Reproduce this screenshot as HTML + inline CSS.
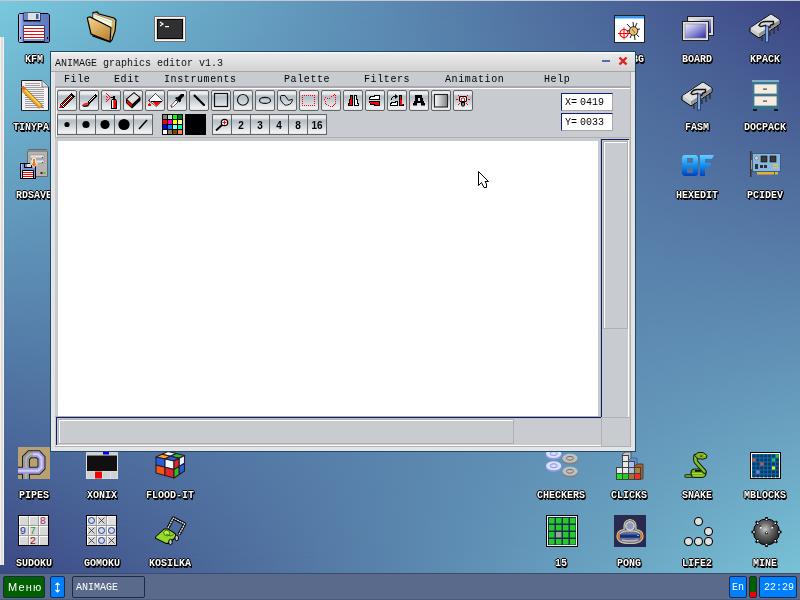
<!DOCTYPE html>
<html><head><meta charset="utf-8">
<style>
*{margin:0;padding:0;box-sizing:border-box}
html,body{width:800px;height:600px;overflow:hidden}
body{position:relative;font-family:"Liberation Mono",monospace;font-size:10px;background:#5a86af}
.a{position:absolute}
svg{position:absolute;overflow:visible}
.btn svg,.sb svg{shape-rendering:geometricPrecision}
#title span,.mi,.coord span,.tb span{will-change:transform}
#bgb{left:0;top:0;width:800px;height:573px;background:linear-gradient(to right,#3c4985,#79c2d6)}
#bgt{left:0;top:0;width:800px;height:573px;background:linear-gradient(to right,#79cade,#3c4583);-webkit-mask-image:linear-gradient(to bottom,#000,rgba(0,0,0,0));mask-image:linear-gradient(to bottom,#000,rgba(0,0,0,0))}
#topline{left:0;top:0;width:800px;height:1px;background:#c4c8d4}
#lstrip{left:0;top:37px;width:4px;height:528px;background:linear-gradient(to right,#f0f0f0 0,#f0f0f0 1px,#e0dcdc 1px,#e0dcdc 3px,#f8f4f4 3px)}
#task{left:0;top:573px;width:800px;height:27px;background:#5a6a8a;border-top:1px solid #3c4a6c;border-bottom:1px solid #4c5a7c}
.tb{position:absolute;border:1px solid #1a2a4a;border-radius:2px;color:#fff;font-size:10px;line-height:10px}
.tb span{position:absolute;top:6px}
.lbl{position:absolute;color:#fff;font-family:"Liberation Mono",monospace;font-size:10px;font-weight:bold;will-change:transform;text-align:center;width:80px;line-height:10px;text-shadow:1px 0 #000,-1px 0 #000,0 1px #000,0 -1px #000,1px 1px #000,1px 2px #000}
.ico{position:absolute;width:32px;height:32px}
#title span{position:absolute;left:4px;top:7px;color:#222;line-height:10px}
.mi{position:absolute;line-height:10px;color:#000;letter-spacing:0.6px}
.btn{position:absolute;width:20px;height:21px;border:1px solid #646464;border-radius:2px;
background:linear-gradient(#dce0e4 0px,#eaecee 1px,#eaecee 3px,#b8c0c8 5px,#b8c0c8 7px,#f0f2f4 17px,#e0e2e4 19px)}
.sb{position:absolute;top:114px;width:20px;height:21px;border:1px solid #646464;
background:linear-gradient(#dce0e4 0px,#eaecee 1px,#eaecee 3px,#b8c0c8 5px,#b8c0c8 7px,#f0f2f4 17px,#e0e2e4 19px)}
.btn svg,.sb svg{left:-1px;top:-1px}
.num{position:absolute;top:6px;left:0;width:18px;text-align:center;font-family:"Liberation Sans",sans-serif;font-weight:bold;font-size:10px;line-height:10px;color:#000;will-change:transform}
.coord{position:absolute;left:561px;width:52px;height:18px;background:#fff;border-top:1px solid #102070;border-left:1px solid #102070;border-right:1px solid #a8a8a8;border-bottom:1px solid #a8a8a8}
.coord span{position:absolute;left:3px;top:4px;line-height:10px;color:#000}
</style></head><body>
<div id="bgb" class="a"></div>
<div id="bgt" class="a"></div>
<div id="topline" class="a"></div>
<div id="lstrip" class="a"></div>
<svg style="left:0;top:0" width="800" height="573" viewBox="0 0 800 573"><g transform="translate(18,11)"><defs><linearGradient id="fb" x1="0" x2="1"><stop offset="0" stop-color="#b8c8f0"/><stop offset="0.15" stop-color="#7890d8"/><stop offset="1" stop-color="#6078c0"/></linearGradient></defs><path d="M1.5 2.5 L30 2.5 L31.5 4 L31.5 30.5 L30.5 31.5 L1.5 31.5 L0.5 30.5 L0.5 3.5 Z" fill="url(#fb)" stroke="#000" stroke-width="1"/><rect x="5.5" y="1.5" width="17" height="9" fill="#000"/><rect x="6" y="2" width="4" height="7" fill="#6a88c8"/><rect x="10" y="2" width="12" height="7" fill="#e0e0e0"/><rect x="18" y="3" width="2.5" height="5" fill="#3060b0"/><rect x="5.5" y="14.5" width="21" height="17" fill="#000"/><rect x="6" y="15" width="20" height="15" fill="#f0ffff"/><rect x="6" y="17" width="20" height="1" fill="#ff0000"/><rect x="6" y="20" width="20" height="1" fill="#ff0000"/><rect x="6" y="23" width="20" height="1" fill="#ff0000"/><rect x="6" y="26" width="20" height="1" fill="#ff0000"/><rect x="6" y="28" width="20" height="2" fill="#8098d0"/><rect x="2" y="26" width="1" height="2" fill="#000"/><rect x="29" y="26" width="1" height="2" fill="#000"/></g><g transform="translate(86,11)"><defs><linearGradient id="fo" x1="0" y1="0" x2="0.6" y2="1"><stop offset="0" stop-color="#f8d890"/><stop offset="1" stop-color="#c08838"/></linearGradient></defs><path d="M7 1.5 L11 1 L13 3 L28 7 L30 9 L29 20 L26 29 L24 31 L7 25 Z" fill="#e8b860" stroke="#000" stroke-width="1.2"/><path d="M7 2.5 L27 9.5 L25 27 L7 20 Z" fill="#f8f8f0" stroke="#606080" stroke-width="0.6"/><path d="M8 5 L26 12 L25 24" fill="none" stroke="#d0f080" stroke-width="1"/><path d="M1.5 6.5 L4 6 L24 16 L25 16.5 L24 30.5 L5 23 L1.5 8 Z" fill="url(#fo)" stroke="#000" stroke-width="1.2"/></g><g transform="translate(154,11)"><rect x="0.5" y="5.5" width="31" height="25" fill="#d8d8d8" stroke="#707070" stroke-width="1"/><rect x="1.5" y="6.5" width="29" height="23" fill="none" stroke="#f8f8f8" stroke-width="1"/><rect x="3" y="8" width="26" height="20" fill="#000"/><rect x="4" y="9" width="24" height="18" fill="#303030"/><path d="M6 11 L9 13 L6 15" fill="none" stroke="#fff" stroke-width="1.2"/><rect x="11" y="15" width="4" height="1.2" fill="#fff"/></g><g transform="translate(613,11)"><rect x="1.5" y="4.5" width="30" height="27" fill="#fff" stroke="#202020" stroke-width="1"/><rect x="2" y="5" width="29" height="2.5" fill="#3898f0"/><circle cx="11" cy="22.5" r="4" fill="none" stroke="#f00" stroke-width="1.2"/><path d="M11 16.5 V28.5 M5 22.5 H17" stroke="#f00" stroke-width="1"/><path d="M14 13 L26 26 M20 11 L22 29 M14 20 L27 18 M24 12 L17 27" stroke="#000" stroke-width="0.9"/><circle cx="20.5" cy="20" r="4.3" fill="#e8c070" stroke="#000" stroke-width="0.8"/><path d="M19 18 L22 22" stroke="#806030" stroke-width="1"/></g><g transform="translate(681,11)"><defs><linearGradient id="bd" x1="0" y1="0" x2="1" y2="1"><stop offset="0" stop-color="#f0f0ff"/><stop offset="0.6" stop-color="#8080d0"/><stop offset="1" stop-color="#2828a0"/></linearGradient></defs><rect x="6.5" y="5.5" width="26" height="19" fill="#d8d8d8" stroke="#202020" stroke-width="1"/><rect x="9" y="8" width="21" height="14" fill="url(#bd)"/><rect x="1.5" y="10.5" width="26" height="19" fill="#e0e0e0" stroke="#202020" stroke-width="1"/><rect x="4" y="13" width="21" height="14" fill="url(#bd)" stroke="#808080" stroke-width="0.6"/></g><g transform="translate(749,11)"><path d="M1 17 L22 3 L31 9 L31 13 L10 27 L1 21 Z" fill="#c8c8c8" stroke="#000" stroke-width="1"/><path d="M1.5 17 L22 3.5 L30.5 9 L10 22.5 Z" fill="#e0e0e0"/><path d="M10 22.5 L30.5 9 L30.5 12.5 L10 26 Z" fill="#909090"/><path d="M13 26 V30 M17 23 V28 M21 21 V25 M25 18 V23 M29 15 V20" stroke="#303030" stroke-width="1.5"/><path d="M10 14.5 Q11.5 10.5 16.5 10.5 L24.5 10.5 L24.5 13 L21.5 14.3 L20.8 16.3 L17.3 16.3 L16.6 14.3 L11.7 15.6 Z" fill="#d8d8d8" stroke="#101010" stroke-width="1.4"/><rect x="16.5" y="15" width="3" height="16" fill="#80a8e0" stroke="#203060" stroke-width="0.8"/></g><g transform="translate(18,79)"><path d="M3.5 1.5 L24 1.5 L30.5 8 L30.5 31.5 L3.5 31.5 Z" fill="#f4f0f4" stroke="#202020" stroke-width="1"/><path d="M24 1.5 L24 8 L30.5 8" fill="#e0e0e0" stroke="#606060" stroke-width="0.8"/><rect x="7" y="4" width="15" height="1" fill="#a0a0a0"/><rect x="7" y="6" width="15" height="1" fill="#a0a0a0"/><rect x="7" y="8" width="19" height="1" fill="#a0a0a0"/><rect x="7" y="10" width="19" height="1" fill="#a0a0a0"/><rect x="7" y="12" width="19" height="1" fill="#a0a0a0"/><rect x="7" y="14" width="19" height="1" fill="#a0a0a0"/><rect x="7" y="16" width="19" height="1" fill="#a0a0a0"/><rect x="7" y="18" width="19" height="1" fill="#a0a0a0"/><rect x="7" y="20" width="19" height="1" fill="#a0a0a0"/><rect x="7" y="22" width="19" height="1" fill="#a0a0a0"/><rect x="7" y="24" width="19" height="1" fill="#a0a0a0"/><rect x="7" y="26" width="19" height="1" fill="#a0a0a0"/><rect x="7" y="28" width="19" height="1" fill="#a0a0a0"/><line x1="5" y1="10" x2="23" y2="28" stroke="#000" stroke-width="5" stroke-opacity="0.5"/><line x1="5" y1="10" x2="23" y2="28" stroke="#f0a020" stroke-width="4"/><line x1="6" y1="10" x2="23" y2="27" stroke="#f8e040" stroke-width="1.2"/><path d="M3 8.5 L5 6.5 L8 9.5 L6 11.5 Z" fill="#e06030"/><path d="M22 26 L26 30 L24 27 Z" fill="#404040"/></g><g transform="translate(681,79)"><path d="M1 17 L22 3 L31 9 L31 13 L10 27 L1 21 Z" fill="#c8c8c8" stroke="#000" stroke-width="1"/><path d="M1.5 17 L22 3.5 L30.5 9 L10 22.5 Z" fill="#e0e0e0"/><path d="M10 22.5 L30.5 9 L30.5 12.5 L10 26 Z" fill="#909090"/><path d="M13 26 V30 M17 23 V28 M21 21 V25 M25 18 V23 M29 15 V20" stroke="#303030" stroke-width="1.5"/><path d="M10 14.5 Q11.5 10.5 16.5 10.5 L24.5 10.5 L24.5 13 L21.5 14.3 L20.8 16.3 L17.3 16.3 L16.6 14.3 L11.7 15.6 Z" fill="#d8d8d8" stroke="#101010" stroke-width="1.4"/><rect x="16.5" y="15" width="3" height="16" fill="#80a8e0" stroke="#203060" stroke-width="0.8"/></g><g transform="translate(749,79)"><rect x="3" y="1" width="27" height="30" fill="#3a7090"/><rect x="3" y="1" width="27" height="2" fill="#80b0c8"/><rect x="5" y="5" width="23" height="10" fill="#f4ece0" stroke="#507890" stroke-width="0.8"/><rect x="5" y="17" width="23" height="10" fill="#f4ece0" stroke="#507890" stroke-width="0.8"/><rect x="14" y="9.5" width="4" height="1.2" fill="#404850"/><rect x="14" y="21.5" width="4" height="1.2" fill="#404850"/><rect x="4" y="30" width="4" height="2" fill="#101820"/><rect x="25" y="30" width="4" height="2" fill="#101820"/></g><g transform="translate(18,147)"><path d="M9.5 5 L10.5 2.5 L28.5 2.5 L29.5 5 L29.5 29.5 L9.5 29.5 Z" fill="#b4b4b4" stroke="#686868" stroke-width="1"/><rect x="10" y="3" width="19" height="2" fill="#8c8c8c"/><rect x="12" y="8" width="14" height="3" fill="#e4e4e4" stroke="#8a8a8a" stroke-width="0.6"/><rect x="12" y="13" width="14" height="3" fill="#e4e4e4" stroke="#8a8a8a" stroke-width="0.6"/><rect x="24" y="10" width="1" height="1" fill="#a02020"/><rect x="24" y="15" width="1" height="1" fill="#a02020"/><rect x="22.5" y="25" width="2" height="2" fill="#800000"/><rect x="25.5" y="25" width="2" height="2" fill="#30d030"/><rect x="2" y="16" width="16" height="16" fill="#000"/><rect x="3" y="17" width="14" height="14" fill="#7890d8"/><rect x="3" y="17" width="1" height="14" fill="#b8c8f0"/><rect x="6" y="16" width="8" height="5" fill="#000"/><rect x="7" y="17" width="2" height="3" fill="#6a88c8"/><rect x="9" y="17" width="4" height="3" fill="#e0e0e0"/><rect x="4" y="23" width="12" height="9" fill="#000"/><rect x="5" y="24" width="10" height="7" fill="#f4ffff"/><rect x="5" y="25" width="10" height="1" fill="#f00"/><rect x="5" y="27" width="10" height="1" fill="#f00"/><rect x="5" y="29" width="10" height="1" fill="#f00"/><path d="M14.5 11.5 L17.5 11.5 L17.5 16.5 L19.5 16.5 L16 20.5 L12.5 16.5 L14.5 16.5 Z" fill="#f07818" stroke="#fff" stroke-width="0.8"/></g><g transform="translate(681,147)"><defs><linearGradient id="hx" x1="0" y1="0" x2="0" y2="1"><stop offset="0" stop-color="#60d0ff"/><stop offset="0.5" stop-color="#1090f0"/><stop offset="1" stop-color="#0040c0"/></linearGradient></defs><path d="M3 8 L15 8 L17 10 L17 16 L16 17.5 L17 19 L17 27 L15 29 L3 29 L1 27 L1 19 L2 17.5 L1 16 L1 10 Z M6 11 L6 16 L12 16 L12 11 Z M6 20 L6 26 L12 26 L12 20 Z" fill="url(#hx)" fill-rule="evenodd"/><path d="M19 8 L33 8 L31 12 L24 12 L24 16 L30 16 L29 20 L24 20 L24 29 L19 29 Z" fill="url(#hx)"/></g><g transform="translate(749,147)"><rect x="1" y="4" width="1.5" height="26" fill="#303030"/><rect x="2" y="13" width="2" height="9" fill="#a0a0a0"/><rect x="3.5" y="6.5" width="28" height="18" fill="#88b8e0" stroke="#305070" stroke-width="0.8"/><circle cx="7.5" cy="11" r="2" fill="#d0d0d0" stroke="#606060" stroke-width="0.5"/><rect x="12" y="9" width="6" height="6" fill="#383838" stroke="#101010" stroke-width="0.6"/><rect x="21" y="9" width="6" height="6" fill="#383838" stroke="#101010" stroke-width="0.6"/><rect x="6" y="17" width="3" height="5" fill="#303030"/><rect x="11" y="18" width="3" height="3" fill="#303030"/><rect x="15" y="18" width="3" height="3" fill="#303030"/><rect x="24" y="17" width="5" height="1.5" fill="#e8c050"/><rect x="24" y="20" width="5" height="1.5" fill="#e8c050"/><rect x="8" y="25" width="17" height="2.5" fill="#e8b030"/><rect x="26" y="25" width="3" height="2.5" fill="#e8b030"/></g><g transform="translate(18,447)"><rect x="0" y="0" width="32" height="32" fill="#b8a070"/><path d="M8 32 V11 L11.7 7.3 H20 L23.5 11 V20.5 L20.2 23.8 H0" fill="none" stroke="#202020" stroke-width="8" stroke-linejoin="miter"/><path d="M8 32 V11 L11.7 7.3 H16" fill="none" stroke="#989898" stroke-width="6"/><path d="M8 32 V11 L11.7 7.3 H16" fill="none" stroke="#b8b8b8" stroke-width="1.5"/><path d="M15 7.3 H20 L23.5 11 V20.5 L20.2 23.8 H0" fill="none" stroke="#a098e0" stroke-width="6"/><path d="M15 7.3 H20 L23.5 11 V20.5 L20.2 23.8 H0" fill="none" stroke="#d0d0f4" stroke-width="2"/></g><g transform="translate(86,447)"><rect x="0" y="5" width="32" height="27" fill="#e0e0e0"/><rect x="0" y="5" width="32" height="3" fill="#d0d0d0"/><rect x="17" y="5" width="6" height="2.5" fill="#0000f0"/><rect x="1" y="8.5" width="30" height="15.5" fill="#101010"/><rect x="1" y="24.5" width="7" height="7" fill="#d0d0d0"/><rect x="9" y="24.5" width="7" height="7" fill="#f00000"/><rect x="17" y="24.5" width="7" height="7" fill="#d0d0d0"/><rect x="25" y="24.5" width="6" height="7" fill="#d0d0d0"/></g><g transform="translate(154,447)"><polygon points="14,4.5 22.25,6.5 16.25,9.25 8,7.25" fill="#e8f8ff" stroke="#301828" stroke-width="1.1" stroke-linejoin="round"/><polygon points="8,7.25 16.25,9.25 11,12 2,10" fill="#f8a818" stroke="#301828" stroke-width="1.1" stroke-linejoin="round"/><polygon points="22.25,6.5 30.5,8.5 25.25,11.25 16.25,9.25" fill="#28c028" stroke="#301828" stroke-width="1.1" stroke-linejoin="round"/><polygon points="16.25,9.25 25.25,11.25 20,14 11,12" fill="#2060e0" stroke="#301828" stroke-width="1.1" stroke-linejoin="round"/><polygon points="2,10 11,12 11,20.25 2,18" fill="#2060e0" stroke="#301828" stroke-width="1.1" stroke-linejoin="round"/><polygon points="11,12 20,14 20,22.5 11,20.25" fill="#e8f8ff" stroke="#301828" stroke-width="1.1" stroke-linejoin="round"/><polygon points="2,18 11,20.25 11,28.5 2,26" fill="#f05818" stroke="#301828" stroke-width="1.1" stroke-linejoin="round"/><polygon points="11,20.25 20,22.5 20,31 11,28.5" fill="#e02828" stroke="#301828" stroke-width="1.1" stroke-linejoin="round"/><polygon points="20,14 25.25,11.25 25.25,19.4 20,22.5" fill="#e02828" stroke="#301828" stroke-width="1.1" stroke-linejoin="round"/><polygon points="25.25,11.25 30.5,8.5 30.5,16.25 25.25,19.4" fill="#e8f8ff" stroke="#301828" stroke-width="1.1" stroke-linejoin="round"/><polygon points="20,22.5 25.25,19.4 25.25,27.5 20,31" fill="#28c028" stroke="#301828" stroke-width="1.1" stroke-linejoin="round"/><polygon points="25.25,19.4 30.5,16.25 30.5,24 25.25,27.5" fill="#2060e0" stroke="#301828" stroke-width="1.1" stroke-linejoin="round"/></g><g transform="translate(545,447)"><ellipse cx="8.7" cy="8.0" rx="8" ry="4.8" fill="#9098e8"/><ellipse cx="8.7" cy="6.5" rx="7.6" ry="4.5" fill="#d8e0ff"/><ellipse cx="8.7" cy="6.5" rx="3.6" ry="1.9" fill="none" stroke="#8890e0" stroke-width="1"/><ellipse cx="8.7" cy="20.2" rx="8" ry="4.8" fill="#9098e8"/><ellipse cx="8.7" cy="18.7" rx="7.6" ry="4.5" fill="#d8e0ff"/><ellipse cx="8.7" cy="18.7" rx="3.6" ry="1.9" fill="none" stroke="#8890e0" stroke-width="1"/><ellipse cx="25" cy="12.8" rx="8" ry="4.8" fill="#808080"/><ellipse cx="25" cy="11.3" rx="7.6" ry="4.5" fill="#c0c0c0"/><ellipse cx="25" cy="11.3" rx="3.6" ry="1.9" fill="none" stroke="#707070" stroke-width="1"/><ellipse cx="25" cy="25.8" rx="8" ry="4.8" fill="#808080"/><ellipse cx="25" cy="24.3" rx="7.6" ry="4.5" fill="#c0c0c0"/><ellipse cx="25" cy="24.3" rx="3.6" ry="1.9" fill="none" stroke="#707070" stroke-width="1"/></g><g transform="translate(613,447)"><path d="M9 8 L12 5 L18 5 L18 14 L15 17 Z" fill="#c0c0c0" stroke="#404040" stroke-width="0.8"/><rect x="9.5" y="8.5" width="6" height="6" fill="#e8e8e8" stroke="#404040" stroke-width="1"/><rect x="9.5" y="14.5" width="6" height="6" fill="#e8e8e8" stroke="#404040" stroke-width="1"/><rect x="3.5" y="20.5" width="6" height="6" fill="#e8e8e8" stroke="#404040" stroke-width="1"/><rect x="9.5" y="20.5" width="6" height="6" fill="#e8e8e8" stroke="#404040" stroke-width="1"/><path d="M15 14 L18 11 L24 11 L24 20 L21 23 Z" fill="#6090d0" stroke="#3060a0" stroke-width="0.8"/><rect x="15.5" y="14.5" width="6" height="6" fill="#a8c0e8" stroke="#404040" stroke-width="1"/><rect x="15.5" y="20.5" width="6" height="6" fill="#a8c0e8" stroke="#404040" stroke-width="1"/><path d="M21 20 L24 17 L30 17 L30 32 L27 32 Z" fill="#a06030" stroke="#503010" stroke-width="0.8"/><rect x="21.5" y="20.5" width="6" height="6" fill="#b08040" stroke="#404040" stroke-width="1"/><rect x="3.5" y="26.5" width="6" height="6" fill="#20e020" stroke="#404040" stroke-width="1"/><rect x="9.5" y="26.5" width="6" height="6" fill="#20d020" stroke="#404040" stroke-width="1"/><rect x="15.5" y="26.5" width="6" height="6" fill="#a07040" stroke="#404040" stroke-width="1"/><rect x="21.5" y="26.5" width="6" height="6" fill="#f03020" stroke="#404040" stroke-width="1"/></g><g transform="translate(681,447)"><path d="M5 29 H11" stroke="#102008" stroke-width="3.4" stroke-linecap="round"/><path d="M5 29 H11" stroke="#88c020" stroke-width="1.6" stroke-linecap="round"/><path d="M10 26 Q10 22 14 22 L21 22 Q25 22 25 26 Q25 30.5 20 30.5 L14 30.5 Q10 30.5 10 26 Z" fill="#70b018" stroke="#102008" stroke-width="1.2"/><path d="M11 26.5 H24 M11.5 28.8 H23.5" stroke="#b0e040" stroke-width="0.9"/><rect x="14" y="23" width="6" height="1.8" fill="#101008"/><path d="M23.5 24.5 L15 15 Q14 13 14.5 9" fill="none" stroke="#102008" stroke-width="4.6" stroke-linecap="round"/><path d="M23.5 24.5 L15 15 Q14 13 14.5 9" fill="none" stroke="#80c020" stroke-width="2.6" stroke-linecap="round"/><path d="M13.5 8.5 L17 5.5 L22 5.5 L26 8.5 L25.5 11 L22 12.2 L17 11.8 Z" fill="#78b820" stroke="#102008" stroke-width="1"/><rect x="19.3" y="8.3" width="1.8" height="1.6" fill="#e00000"/><rect x="23" y="8" width="1" height="1" fill="#e0e000"/></g><g transform="translate(749,447)"><rect x="1" y="5" width="31" height="27" fill="#000"/><rect x="2" y="6" width="29" height="25" fill="#fff"/><rect x="3" y="7" width="27" height="23" fill="#0070d8"/><rect x="3.5" y="7.5" width="3" height="3" fill="#183848"/><rect x="7.4" y="7.5" width="3" height="3" fill="#183848"/><rect x="11.3" y="7.5" width="3" height="3" fill="#183848"/><rect x="15.2" y="7.5" width="3" height="3" fill="#183848"/><rect x="19.1" y="7.5" width="3" height="3" fill="#183848"/><rect x="23.0" y="7.5" width="3" height="3" fill="#183848"/><rect x="26.9" y="7.5" width="3" height="3" fill="#30c020"/><rect x="3.5" y="11.5" width="3" height="3" fill="#f05010"/><rect x="7.4" y="11.5" width="3" height="3" fill="#183848"/><rect x="11.3" y="11.5" width="3" height="3" fill="#183848"/><rect x="15.2" y="11.5" width="3" height="3" fill="#183848"/><rect x="19.1" y="11.5" width="3" height="3" fill="#183848"/><rect x="23.0" y="11.5" width="3" height="3" fill="#30c020"/><rect x="26.9" y="11.5" width="3" height="3" fill="#183848"/><rect x="3.5" y="15.5" width="3" height="3" fill="#183848"/><rect x="7.4" y="15.5" width="3" height="3" fill="#183848"/><rect x="11.3" y="15.5" width="3" height="3" fill="#f05010"/><rect x="15.2" y="15.5" width="3" height="3" fill="#183848"/><rect x="19.1" y="15.5" width="3" height="3" fill="#183848"/><rect x="23.0" y="15.5" width="3" height="3" fill="#183848"/><rect x="26.9" y="15.5" width="3" height="3" fill="#183848"/><rect x="3.5" y="19.5" width="3" height="3" fill="#183848"/><rect x="7.4" y="19.5" width="3" height="3" fill="#183848"/><rect x="11.3" y="19.5" width="3" height="3" fill="#183848"/><rect x="15.2" y="19.5" width="3" height="3" fill="#183848"/><rect x="19.1" y="19.5" width="3" height="3" fill="#183848"/><rect x="23.0" y="19.5" width="3" height="3" fill="#f0f000"/><rect x="26.9" y="19.5" width="3" height="3" fill="#183848"/><rect x="3.5" y="23.5" width="3" height="3" fill="#183848"/><rect x="7.4" y="23.5" width="3" height="3" fill="#a080a0"/><rect x="11.3" y="23.5" width="3" height="3" fill="#183848"/><rect x="15.2" y="23.5" width="3" height="3" fill="#183848"/><rect x="19.1" y="23.5" width="3" height="3" fill="#183848"/><rect x="23.0" y="23.5" width="3" height="3" fill="#183848"/><rect x="26.9" y="23.5" width="3" height="3" fill="#183848"/><rect x="3.5" y="27.5" width="3" height="3" fill="#183848"/><rect x="7.4" y="27.5" width="3" height="3" fill="#183848"/><rect x="11.3" y="27.5" width="3" height="3" fill="#183848"/><rect x="15.2" y="27.5" width="3" height="3" fill="#183848"/><rect x="19.1" y="27.5" width="3" height="3" fill="#183848"/><rect x="23.0" y="27.5" width="3" height="3" fill="#183848"/><rect x="26.9" y="27.5" width="3" height="3" fill="#183848"/></g><g transform="translate(18,515)"><rect x="0" y="0" width="31" height="31" fill="#000"/><rect x="1" y="1" width="29" height="29" fill="#a0a0a0"/><rect x="1" y="1" width="9" height="9" fill="#fff"/><rect x="2" y="2" width="8" height="8" fill="#d8d8d8"/><rect x="11" y="1" width="9" height="9" fill="#fff"/><rect x="12" y="2" width="8" height="8" fill="#d8d8d8"/><rect x="21" y="1" width="9" height="9" fill="#fff"/><rect x="22" y="2" width="8" height="8" fill="#d8d8d8"/><rect x="1" y="11" width="9" height="9" fill="#fff"/><rect x="2" y="12" width="8" height="8" fill="#d8d8d8"/><rect x="11" y="11" width="9" height="9" fill="#fff"/><rect x="12" y="12" width="8" height="8" fill="#d8d8d8"/><rect x="21" y="11" width="9" height="9" fill="#fff"/><rect x="22" y="12" width="8" height="8" fill="#d8d8d8"/><rect x="1" y="21" width="9" height="9" fill="#fff"/><rect x="2" y="22" width="8" height="8" fill="#d8d8d8"/><rect x="11" y="21" width="9" height="9" fill="#fff"/><rect x="12" y="22" width="8" height="8" fill="#d8d8d8"/><rect x="21" y="21" width="9" height="9" fill="#fff"/><rect x="22" y="22" width="8" height="8" fill="#d8d8d8"/><text x="25" y="8.5" font-family="Liberation Mono" font-size="10.5" fill="#b03070" text-anchor="middle">8</text><text x="5" y="18.5" font-family="Liberation Mono" font-size="10.5" fill="#2040a0" text-anchor="middle">9</text><text x="15" y="18.5" font-family="Liberation Mono" font-size="10.5" fill="#20a020" text-anchor="middle">7</text><text x="15" y="28.5" font-family="Liberation Mono" font-size="10.5" fill="#a01010" text-anchor="middle">2</text></g><g transform="translate(86,515)"><rect x="0" y="0" width="31" height="31" fill="#000"/><rect x="1" y="1" width="29" height="29" fill="#a0a0a0"/><rect x="1" y="1" width="9" height="9" fill="#fff"/><rect x="2" y="2" width="8" height="8" fill="#d8d8d8"/><rect x="11" y="1" width="9" height="9" fill="#fff"/><rect x="12" y="2" width="8" height="8" fill="#d8d8d8"/><rect x="21" y="1" width="9" height="9" fill="#fff"/><rect x="22" y="2" width="8" height="8" fill="#e0e0e0"/><rect x="1" y="11" width="9" height="9" fill="#fff"/><rect x="2" y="12" width="8" height="8" fill="#d8d8d8"/><rect x="11" y="11" width="9" height="9" fill="#fff"/><rect x="12" y="12" width="8" height="8" fill="#d8d8d8"/><rect x="21" y="11" width="9" height="9" fill="#fff"/><rect x="22" y="12" width="8" height="8" fill="#d8d8d8"/><rect x="1" y="21" width="9" height="9" fill="#fff"/><rect x="2" y="22" width="8" height="8" fill="#d8d8d8"/><rect x="11" y="21" width="9" height="9" fill="#fff"/><rect x="12" y="22" width="8" height="8" fill="#d8d8d8"/><rect x="21" y="21" width="9" height="9" fill="#fff"/><rect x="22" y="22" width="8" height="8" fill="#d8d8d8"/><circle cx="5.5" cy="5.5" r="3" fill="none" stroke="#2040b0" stroke-width="1"/><path d="M12.5 2.5 L18.5 8.5 M18.5 2.5 L12.5 8.5" stroke="#303030" stroke-width="0.8"/><path d="M2.5 12.5 L8.5 18.5 M8.5 12.5 L2.5 18.5" stroke="#303030" stroke-width="0.8"/><circle cx="15.5" cy="15.5" r="3" fill="none" stroke="#2040b0" stroke-width="1"/><circle cx="25.5" cy="15.5" r="3" fill="none" stroke="#2040b0" stroke-width="1"/><path d="M2.5 22.5 L8.5 28.5 M8.5 22.5 L2.5 28.5" stroke="#303030" stroke-width="0.8"/><circle cx="15.5" cy="25.5" r="3" fill="none" stroke="#2040b0" stroke-width="1"/><path d="M22.5 22.5 L28.5 28.5 M28.5 22.5 L22.5 28.5" stroke="#303030" stroke-width="0.8"/></g><g transform="translate(154,515)"><path d="M14 13 L19.3 3 L30.7 9 L25 19.5" fill="none" stroke="#000" stroke-width="3.2" stroke-linejoin="round"/><path d="M14 13 L19.3 3 L30.7 9 L25 19.5" fill="none" stroke="#f0f0f0" stroke-width="1.3" stroke-dasharray="2 0.6" stroke-linejoin="round"/><path d="M1 22 L10 13.5 L14 13.5 L22 18.5 L22 22.5 L14.5 29 L12 29 L1 23.5 Z" fill="#000"/><path d="M2 22 L10.3 14.5 L13.8 14.5 L21 19 L21 22 L14 27.8 L12 27.8 L2 22.8 Z" fill="#98d828"/><path d="M2 22.5 L12 27.5 L14 27.5 L21 21.5 L21 22 L14 28 L12 28 L2 23 Z" fill="#60a818"/><path d="M9.5 17 L12 15 L15 16 L16 19 L14 21 L10.5 20 Z" fill="#b8f040" stroke="#2a6010" stroke-width="0.8"/><path d="M12 19 L17 21 L20 19" fill="none" stroke="#2a6010" stroke-width="0.8"/><ellipse cx="16.5" cy="27" rx="1.8" ry="2.8" fill="#c8c8c8" stroke="#000" stroke-width="1"/><ellipse cx="22.7" cy="23" rx="1.8" ry="2.8" fill="#c8c8c8" stroke="#000" stroke-width="1"/></g><g transform="translate(545,515)"><rect x="1" y="0" width="32" height="32" fill="#000"/><rect x="2" y="1" width="30" height="30" fill="#f0f0f0"/><rect x="3" y="2" width="28" height="28" fill="#103050"/><rect x="4" y="3" width="5.5" height="5.5" fill="#28c828"/><rect x="11" y="3" width="5.5" height="5.5" fill="#28c828"/><rect x="18" y="3" width="5.5" height="5.5" fill="#28c828"/><rect x="25" y="3" width="5.5" height="5.5" fill="#28c828"/><rect x="4" y="10" width="5.5" height="5.5" fill="#28c828"/><rect x="11" y="10" width="5.5" height="5.5" fill="#28c828"/><rect x="18" y="10" width="5.5" height="5.5" fill="#28c828"/><rect x="25" y="10" width="5.5" height="5.5" fill="#28c828"/><rect x="4" y="17" width="5.5" height="5.5" fill="#28c828"/><rect x="11" y="17" width="5.5" height="5.5" fill="#a0a0a0"/><rect x="18" y="17" width="5.5" height="5.5" fill="#28c828"/><rect x="25" y="17" width="5.5" height="5.5" fill="#28c828"/><rect x="4" y="24" width="5.5" height="5.5" fill="#28c828"/><rect x="11" y="24" width="5.5" height="5.5" fill="#28c828"/><rect x="18" y="24" width="5.5" height="5.5" fill="#28c828"/><rect x="25" y="24" width="5.5" height="5.5" fill="#28c828"/></g><g transform="translate(613,515)"><rect x="1" y="0" width="32" height="32" fill="#2a2a50"/><path d="M4 21 Q4 15.5 11 14.5 Q10 5 17 4.5 Q24 5 23 14.5 Q30 15.5 30 21 Q30 28.5 17 28.5 Q4 28.5 4 21 Z" fill="#6a7090" stroke="#d8c890" stroke-width="1.2"/><path d="M6 21 Q6 17 13 16 L21 16 Q28 17 28 21" fill="none" stroke="#e8e0c0" stroke-width="1"/><circle cx="17" cy="11" r="4.2" fill="#9098b8" stroke="#f0f0f0" stroke-width="1"/><path d="M9 25 Q17 27 25 25" fill="none" stroke="#b8b8d0" stroke-width="1.5"/><rect x="6" y="19.5" width="22" height="3" fill="#1030a0"/><rect x="7" y="21.5" width="20" height="1" fill="#103048"/><rect x="24" y="20" width="2" height="1" fill="#40d0c0"/><rect x="4.5" y="19" width="2.5" height="4.5" rx="1" fill="#e07818"/><rect x="27" y="19" width="2.5" height="4.5" rx="1" fill="#e07818"/></g><g transform="translate(681,515)"><circle cx="17.5" cy="6.5" r="4" fill="#e0e0e0" stroke="#000" stroke-width="1.1"/><circle cx="27.5" cy="16.5" r="4" fill="#e0e0e0" stroke="#000" stroke-width="1.1"/><circle cx="7.5" cy="26.5" r="4" fill="#e0e0e0" stroke="#000" stroke-width="1.1"/><circle cx="17.5" cy="26.5" r="4" fill="#e0e0e0" stroke="#000" stroke-width="1.1"/><circle cx="27.5" cy="26.5" r="4" fill="#e0e0e0" stroke="#000" stroke-width="1.1"/></g><g transform="translate(749,515)"><defs><radialGradient id="mn" cx="0.45" cy="0.4" r="0.65"><stop offset="0" stop-color="#c8c8c8"/><stop offset="0.4" stop-color="#686868"/><stop offset="1" stop-color="#181818"/></radialGradient></defs><circle cx="17.5" cy="17" r="13" fill="url(#mn)" stroke="#000" stroke-width="1"/><line x1="17.5" y1="6.0" x2="17.5" y2="2.0" stroke="#000" stroke-width="2.6"/><rect x="16.7" y="3.7" width="1.6" height="1.6" fill="#fff"/><line x1="25.3" y1="9.2" x2="28.1" y2="6.4" stroke="#000" stroke-width="2.6"/><rect x="25.5" y="7.4" width="1.6" height="1.6" fill="#fff"/><line x1="28.5" y1="17.0" x2="32.5" y2="17.0" stroke="#000" stroke-width="2.6"/><rect x="29.2" y="16.2" width="1.6" height="1.6" fill="#fff"/><line x1="25.3" y1="24.8" x2="28.1" y2="27.6" stroke="#000" stroke-width="2.6"/><rect x="25.5" y="25.0" width="1.6" height="1.6" fill="#fff"/><line x1="17.5" y1="28.0" x2="17.5" y2="32.0" stroke="#000" stroke-width="2.6"/><rect x="16.7" y="28.7" width="1.6" height="1.6" fill="#fff"/><line x1="9.7" y1="24.8" x2="6.9" y2="27.6" stroke="#000" stroke-width="2.6"/><rect x="7.9" y="25.0" width="1.6" height="1.6" fill="#fff"/><line x1="6.5" y1="17.0" x2="2.5" y2="17.0" stroke="#000" stroke-width="2.6"/><rect x="4.2" y="16.2" width="1.6" height="1.6" fill="#fff"/><line x1="9.7" y1="9.2" x2="6.9" y2="6.4" stroke="#000" stroke-width="2.6"/><rect x="7.9" y="7.4" width="1.6" height="1.6" fill="#fff"/><circle cx="17.5" cy="18" r="1.6" fill="#303030"/><rect x="17" y="17" width="1.2" height="1.2" fill="#fff"/><rect x="11" y="12" width="1.5" height="1.5" fill="#fff"/><rect x="22.5" y="12" width="1.5" height="1.5" fill="#fff"/><rect x="10.5" y="10.5" width="1.2" height="1.2" fill="#000"/><rect x="23.5" y="10.5" width="1.2" height="1.2" fill="#000"/></g></svg><div class="lbl" style="left:-6px;top:55px">KFM</div><div class="lbl" style="left:589px;top:55px">MTDBG</div><div class="lbl" style="left:657px;top:55px">BOARD</div><div class="lbl" style="left:725px;top:55px">KPACK</div><div class="lbl" style="left:-6px;top:123px">TINYPAD</div><div class="lbl" style="left:657px;top:123px">FASM</div><div class="lbl" style="left:725px;top:123px">DOCPACK</div><div class="lbl" style="left:-6px;top:191px">RDSAVE</div><div class="lbl" style="left:657px;top:191px">HEXEDIT</div><div class="lbl" style="left:725px;top:191px">PCIDEV</div><div class="lbl" style="left:-6px;top:491px">PIPES</div><div class="lbl" style="left:62px;top:491px">XONIX</div><div class="lbl" style="left:130px;top:491px">FLOOD-IT</div><div class="lbl" style="left:521px;top:491px">CHECKERS</div><div class="lbl" style="left:589px;top:491px">CLICKS</div><div class="lbl" style="left:657px;top:491px">SNAKE</div><div class="lbl" style="left:725px;top:491px">MBLOCKS</div><div class="lbl" style="left:-6px;top:559px">SUDOKU</div><div class="lbl" style="left:62px;top:559px">GOMOKU</div><div class="lbl" style="left:130px;top:559px">KOSILKA</div><div class="lbl" style="left:521px;top:559px">15</div><div class="lbl" style="left:589px;top:559px">PONG</div><div class="lbl" style="left:657px;top:559px">LIFE2</div><div class="lbl" style="left:725px;top:559px">MINE</div>
<div class="a" style="left:50px;top:51px;width:586px;height:401px;background:#1c4a6a;"></div>
<div class="a" style="left:51px;top:52px;width:584px;height:399px;background:#e4e4e4;"></div>
<div class="a" style="left:51px;top:52px;width:1px;height:399px;background:#ece8e8;"></div>
<div class="a" style="left:51px;top:52px;width:584px;height:19px;background:linear-gradient(#f8f8f8 0,#f8f8f8 1px,#eaeaea 2px,#d2d2d2 19px);"></div>
<div class="a" style="left:55px;top:59px;line-height:10px;color:#111;will-change:transform">ANIMAGE graphics editor v1.3</div>
<svg style="left:0;top:0" width="800" height="100"><rect x="602" y="60" width="8" height="2" fill="#5a6ab0"/><path d="M619.5 57.5 L626.5 64.5 M626.5 57.5 L619.5 64.5" stroke="#e02020" stroke-width="2.4"/></svg>
<div class="a" style="left:51px;top:71px;width:584px;height:1px;background:#a8a6a8;"></div>
<div class="a" style="left:55px;top:72px;width:576px;height:375px;background:#c8ccd0;"></div>
<div class="a" style="left:630px;top:72px;width:1px;height:375px;background:#b0b0b0;"></div>
<div class="a mi" style="left:64px;top:75px">File</div>
<div class="a mi" style="left:114px;top:75px">Edit</div>
<div class="a mi" style="left:164px;top:75px">Instruments</div>
<div class="a mi" style="left:284px;top:75px">Palette</div>
<div class="a mi" style="left:364px;top:75px">Filters</div>
<div class="a mi" style="left:445px;top:75px">Animation</div>
<div class="a mi" style="left:544px;top:75px">Help</div>
<div class="a" style="left:55px;top:86px;width:575px;height:2px;background:#aaa6aa;"></div>
<div class="a" style="left:55px;top:88px;width:1px;height:50px;background:#b0b0b0;"></div>
<div class="a" style="left:56px;top:88px;width:574px;height:1px;background:#ffffff;"></div>
<div class="a" style="left:56px;top:88px;width:1px;height:49px;background:#ffffff;"></div>
<div class="a" style="left:55px;top:137px;width:576px;height:1px;background:#b0b0b0;"></div>
<div class="a" style="left:58px;top:141px;width:540px;height:275px;background:#ffffff;"></div>
<div class="a" style="left:600px;top:138px;width:1px;height:278px;background:#b8b8bc;"></div>
<div class="a" style="left:601px;top:139px;width:1px;height:278px;background:#0c1c6c;"></div>
<div class="a" style="left:601px;top:139px;width:28px;height:1px;background:#0c1c6c;"></div>
<div class="a" style="left:628px;top:140px;width:1px;height:277px;background:#ffffff;"></div>
<div class="a" style="left:603px;top:141px;width:25px;height:188px;background:#b0b0b0;"></div>
<div class="a" style="left:604px;top:142px;width:23px;height:186px;background:#ffffff;"></div>
<div class="a" style="left:605px;top:143px;width:22px;height:185px;background:#c8ccd0;"></div>
<div class="a" style="left:55px;top:416px;width:546px;height:1px;background:#b0b0b0;"></div>
<div class="a" style="left:56px;top:417px;width:545px;height:1px;background:#0c1c6c;"></div>
<div class="a" style="left:56px;top:417px;width:1px;height:28px;background:#0c1c6c;"></div>
<div class="a" style="left:57px;top:418px;width:544px;height:1px;background:#c0c4c8;"></div>
<div class="a" style="left:58px;top:419px;width:456px;height:25px;background:#b0b0b0;"></div>
<div class="a" style="left:59px;top:420px;width:454px;height:23px;background:#ffffff;"></div>
<div class="a" style="left:60px;top:421px;width:453px;height:22px;background:#c8ccd0;"></div>
<div class="a" style="left:56px;top:445px;width:545px;height:1px;background:#ffffff;"></div>
<div class="a" style="left:55px;top:446px;width:576px;height:1px;background:#b0b0b0;"></div>
<div class="a" style="left:601px;top:417px;width:30px;height:30px;background:#b0b0b0;"></div>
<div class="a" style="left:602px;top:418px;width:28px;height:28px;background:#c8ccd0;"></div>
<div class="coord" style="top:93px"><span>X=</span><span style="left:18px">0419</span></div>
<div class="coord" style="top:113px"><span>Y=</span><span style="left:18px">0033</span></div>
<div class="btn" style="left:57px;top:90px"><svg width="20" height="21" viewBox="0 0 20 21"><rect x="3" y="14" width="1" height="1" fill="#000"/><rect x="3" y="15" width="1" height="1" fill="#000"/><rect x="4" y="13" width="1" height="1" fill="#000"/><rect x="4" y="14" width="1" height="1" fill="#000"/><rect x="4" y="15" width="1" height="1" fill="#000"/><rect x="4" y="16" width="1" height="1" fill="#000"/><rect x="5" y="12" width="1" height="1" fill="#000"/><rect x="5" y="13" width="1" height="1" fill="#000"/><rect x="5" y="14" width="1" height="1" fill="#000"/><rect x="5" y="15" width="1" height="1" fill="#000"/><rect x="5" y="16" width="1" height="1" fill="#000"/><rect x="5" y="17" width="1" height="1" fill="#000"/><rect x="6" y="11" width="1" height="1" fill="#000"/><rect x="6" y="12" width="1" height="1" fill="#000"/><rect x="6" y="13" width="1" height="1" fill="#000"/><rect x="6" y="14" width="1" height="1" fill="#000"/><rect x="6" y="15" width="1" height="1" fill="#000"/><rect x="6" y="16" width="1" height="1" fill="#000"/><rect x="6" y="17" width="1" height="1" fill="#000"/><rect x="7" y="10" width="1" height="1" fill="#000"/><rect x="7" y="11" width="1" height="1" fill="#000"/><rect x="7" y="12" width="1" height="1" fill="#000"/><rect x="7" y="13" width="1" height="1" fill="#000"/><rect x="7" y="14" width="1" height="1" fill="#000"/><rect x="7" y="15" width="1" height="1" fill="#000"/><rect x="7" y="16" width="1" height="1" fill="#000"/><rect x="8" y="9" width="1" height="1" fill="#000"/><rect x="8" y="10" width="1" height="1" fill="#000"/><rect x="8" y="11" width="1" height="1" fill="#000"/><rect x="8" y="12" width="1" height="1" fill="#000"/><rect x="8" y="13" width="1" height="1" fill="#000"/><rect x="8" y="14" width="1" height="1" fill="#000"/><rect x="8" y="15" width="1" height="1" fill="#000"/><rect x="9" y="8" width="1" height="1" fill="#000"/><rect x="9" y="9" width="1" height="1" fill="#000"/><rect x="9" y="10" width="1" height="1" fill="#000"/><rect x="9" y="11" width="1" height="1" fill="#000"/><rect x="9" y="12" width="1" height="1" fill="#000"/><rect x="9" y="13" width="1" height="1" fill="#000"/><rect x="9" y="14" width="1" height="1" fill="#000"/><rect x="10" y="7" width="1" height="1" fill="#000"/><rect x="10" y="8" width="1" height="1" fill="#000"/><rect x="10" y="9" width="1" height="1" fill="#000"/><rect x="10" y="10" width="1" height="1" fill="#000"/><rect x="10" y="11" width="1" height="1" fill="#000"/><rect x="10" y="12" width="1" height="1" fill="#000"/><rect x="10" y="13" width="1" height="1" fill="#000"/><rect x="11" y="6" width="1" height="1" fill="#000"/><rect x="11" y="7" width="1" height="1" fill="#000"/><rect x="11" y="8" width="1" height="1" fill="#000"/><rect x="11" y="9" width="1" height="1" fill="#000"/><rect x="11" y="10" width="1" height="1" fill="#000"/><rect x="11" y="11" width="1" height="1" fill="#000"/><rect x="11" y="12" width="1" height="1" fill="#000"/><rect x="12" y="5" width="1" height="1" fill="#000"/><rect x="12" y="6" width="1" height="1" fill="#000"/><rect x="12" y="7" width="1" height="1" fill="#000"/><rect x="12" y="8" width="1" height="1" fill="#000"/><rect x="12" y="9" width="1" height="1" fill="#000"/><rect x="12" y="10" width="1" height="1" fill="#000"/><rect x="12" y="11" width="1" height="1" fill="#000"/><rect x="13" y="4" width="1" height="1" fill="#000"/><rect x="13" y="5" width="1" height="1" fill="#000"/><rect x="13" y="6" width="1" height="1" fill="#000"/><rect x="13" y="7" width="1" height="1" fill="#000"/><rect x="13" y="8" width="1" height="1" fill="#000"/><rect x="13" y="9" width="1" height="1" fill="#000"/><rect x="13" y="10" width="1" height="1" fill="#000"/><rect x="14" y="3" width="1" height="1" fill="#000"/><rect x="14" y="4" width="1" height="1" fill="#000"/><rect x="14" y="5" width="1" height="1" fill="#000"/><rect x="14" y="6" width="1" height="1" fill="#000"/><rect x="14" y="7" width="1" height="1" fill="#000"/><rect x="14" y="8" width="1" height="1" fill="#000"/><rect x="14" y="9" width="1" height="1" fill="#000"/><rect x="15" y="4" width="1" height="1" fill="#000"/><rect x="15" y="5" width="1" height="1" fill="#000"/><rect x="15" y="6" width="1" height="1" fill="#000"/><rect x="15" y="7" width="1" height="1" fill="#000"/><rect x="15" y="8" width="1" height="1" fill="#000"/><rect x="16" y="5" width="1" height="1" fill="#000"/><rect x="16" y="6" width="1" height="1" fill="#000"/><rect x="16" y="7" width="1" height="1" fill="#000"/><rect x="17" y="6" width="1" height="1" fill="#000"/><rect x="5" y="13" width="1" height="1" fill="#f00"/><rect x="6" y="12" width="1" height="1" fill="#f00"/><rect x="7" y="11" width="1" height="1" fill="#f00"/><rect x="8" y="10" width="1" height="1" fill="#f00"/><rect x="9" y="9" width="1" height="1" fill="#f00"/><rect x="10" y="8" width="1" height="1" fill="#f00"/><rect x="11" y="7" width="1" height="1" fill="#f00"/><rect x="12" y="6" width="1" height="1" fill="#f00"/><rect x="13" y="5" width="1" height="1" fill="#f00"/><rect x="7" y="15" width="1" height="1" fill="#f00"/><rect x="8" y="14" width="1" height="1" fill="#f00"/><rect x="9" y="13" width="1" height="1" fill="#f00"/><rect x="10" y="12" width="1" height="1" fill="#f00"/><rect x="11" y="11" width="1" height="1" fill="#f00"/><rect x="12" y="10" width="1" height="1" fill="#f00"/><rect x="13" y="9" width="1" height="1" fill="#f00"/><rect x="14" y="8" width="1" height="1" fill="#f00"/><rect x="15" y="7" width="1" height="1" fill="#f00"/><rect x="4" y="14" width="1" height="1" fill="#fff"/><rect x="5" y="15" width="1" height="1" fill="#fff"/><rect x="6" y="14" width="1" height="1" fill="#fff"/><rect x="7" y="13" width="1" height="1" fill="#fff"/><rect x="8" y="12" width="1" height="1" fill="#fff"/><rect x="9" y="11" width="1" height="1" fill="#fff"/><rect x="10" y="10" width="1" height="1" fill="#fff"/><rect x="11" y="9" width="1" height="1" fill="#fff"/><rect x="12" y="8" width="1" height="1" fill="#fff"/><rect x="13" y="7" width="1" height="1" fill="#fff"/><rect x="14" y="6" width="1" height="1" fill="#fff"/><rect x="6" y="16" width="1" height="1" fill="#fff"/><rect x="3" y="16" width="1" height="1" fill="#f00"/><rect x="3" y="17" width="1" height="1" fill="#f00"/><rect x="4" y="17" width="1" height="1" fill="#f00"/><rect x="2" y="17" width="1" height="1" fill="#f00"/><rect x="3" y="15" width="1" height="1" fill="#f00"/><rect x="4" y="16" width="1" height="1" fill="#f00"/></svg></div>
<div class="btn" style="left:79px;top:90px"><svg width="20" height="21" viewBox="0 0 20 21"><rect x="9" y="11" width="1" height="1" fill="#000"/><rect x="9" y="12" width="1" height="1" fill="#000"/><rect x="10" y="10" width="1" height="1" fill="#000"/><rect x="10" y="11" width="1" height="1" fill="#000"/><rect x="10" y="12" width="1" height="1" fill="#000"/><rect x="10" y="13" width="1" height="1" fill="#000"/><rect x="11" y="9" width="1" height="1" fill="#000"/><rect x="11" y="10" width="1" height="1" fill="#000"/><rect x="11" y="11" width="1" height="1" fill="#000"/><rect x="11" y="12" width="1" height="1" fill="#000"/><rect x="12" y="8" width="1" height="1" fill="#000"/><rect x="12" y="9" width="1" height="1" fill="#000"/><rect x="12" y="10" width="1" height="1" fill="#000"/><rect x="12" y="11" width="1" height="1" fill="#000"/><rect x="13" y="7" width="1" height="1" fill="#000"/><rect x="13" y="8" width="1" height="1" fill="#000"/><rect x="13" y="9" width="1" height="1" fill="#000"/><rect x="13" y="10" width="1" height="1" fill="#000"/><rect x="14" y="6" width="1" height="1" fill="#000"/><rect x="14" y="7" width="1" height="1" fill="#000"/><rect x="14" y="8" width="1" height="1" fill="#000"/><rect x="14" y="9" width="1" height="1" fill="#000"/><rect x="15" y="5" width="1" height="1" fill="#000"/><rect x="15" y="6" width="1" height="1" fill="#000"/><rect x="15" y="7" width="1" height="1" fill="#000"/><rect x="15" y="8" width="1" height="1" fill="#000"/><rect x="16" y="4" width="1" height="1" fill="#000"/><rect x="16" y="5" width="1" height="1" fill="#000"/><rect x="16" y="6" width="1" height="1" fill="#000"/><rect x="16" y="7" width="1" height="1" fill="#000"/><rect x="17" y="5" width="1" height="1" fill="#000"/><rect x="17" y="6" width="1" height="1" fill="#000"/><rect x="10" y="11" width="1" height="1" fill="#fff"/><rect x="11" y="10" width="1" height="1" fill="#fff"/><rect x="12" y="9" width="1" height="1" fill="#fff"/><rect x="13" y="8" width="1" height="1" fill="#fff"/><rect x="14" y="7" width="1" height="1" fill="#fff"/><rect x="15" y="6" width="1" height="1" fill="#fff"/><path d="M3 15.5 L6 13.5 L10 13 L10.5 14.5 L9 16.5 L5 17 Z" fill="#000"/><path d="M3 15 L6 13 L9.5 12.5 L9 15 L5 16 Z" fill="#f03030"/></svg></div>
<div class="btn" style="left:101px;top:90px"><svg width="20" height="21" viewBox="0 0 20 21"><rect x="5" y="3" width="1" height="1" fill="#f00"/><rect x="6" y="4" width="1" height="1" fill="#f00"/><rect x="7" y="5" width="1" height="1" fill="#f00"/><rect x="8" y="6" width="1" height="1" fill="#f00"/><rect x="9" y="7" width="1" height="1" fill="#f00"/><rect x="5" y="6" width="1" height="1" fill="#f00"/><rect x="6" y="7" width="1" height="1" fill="#f00"/><rect x="8" y="8" width="1" height="1" fill="#f00"/><rect x="7" y="9" width="1" height="1" fill="#f00"/><rect x="5" y="9" width="1" height="1" fill="#f00"/><rect x="6" y="10" width="1" height="1" fill="#f00"/><rect x="5" y="11" width="1" height="1" fill="#f00"/><rect x="10" y="7" width="2" height="1" fill="#000"/><rect x="12" y="6" width="2" height="3" fill="#000"/><path d="M10 11 L11 9 L15 9 L16 11 L16 19 L10 19 Z" fill="#000"/><rect x="11" y="10" width="1.6" height="8" fill="#fff"/><rect x="12.6" y="10" width="2.4" height="8" fill="#f00"/></svg></div>
<div class="btn" style="left:123px;top:90px"><svg width="20" height="21" viewBox="0 0 20 21"><path d="M11 2 L17.5 7.5 L17.5 10.5 L9 18.5 L3 13 L3 9 Z" fill="#000"/><path d="M11 3.2 L16.2 7.6 L9.2 14 L4.2 9.3 Z" fill="#e0e0e0"/><path d="M4 10.2 L8.9 14.5 L8.9 17.3 L4 13 Z" fill="#f00"/></svg></div>
<div class="btn" style="left:145px;top:90px"><svg width="20" height="21" viewBox="0 0 20 21"><path d="M10.5 3.5 L17.5 10.5 L11.4 16.5 L3.5 10.5 Z" fill="#fff" stroke="#000" stroke-width="1" stroke-dasharray="1 0.4"/><path d="M7.5 12 L15.5 12 L11.4 16 Z" fill="#f00"/><rect x="6" y="11" width="11" height="1" fill="#000"/><rect x="4" y="10" width="1" height="1" fill="#f00"/><path d="M3 16 L3 14 L4 14 L4 13 L5 13 L5 14 L6 14 L6 16 Z" fill="#f00"/></svg></div>
<div class="btn" style="left:167px;top:90px"><svg width="20" height="21" viewBox="0 0 20 21"><path d="M14 4 L17 4 L17 6 L14 9 L14 11 L12.5 12.5 L8 8 L9.5 7 L10.5 7.5 Z" fill="#000"/><path d="M4.2 15.5 L9 10 L11 12 L6 17 L4.2 17 Z" fill="#fff" stroke="#000" stroke-width="1" stroke-dasharray="1 0.5"/><rect x="4" y="16" width="1.2" height="1.2" fill="#f00"/></svg></div>
<div class="btn" style="left:189px;top:90px"><svg width="20" height="21" viewBox="0 0 20 21"><line x1="5.5" y1="5.5" x2="15" y2="15" stroke="#000" stroke-width="2.1" stroke-linecap="round"/></svg></div>
<div class="btn" style="left:211px;top:90px"><svg width="20" height="21" viewBox="0 0 20 21"><rect x="3.5" y="3.5" width="13" height="13" fill="none" stroke="#111" stroke-width="1.2"/></svg></div>
<div class="btn" style="left:233px;top:90px"><svg width="20" height="21" viewBox="0 0 20 21"><circle cx="9.9" cy="9.9" r="5.4" fill="none" stroke="#111" stroke-width="1.1"/></svg></div>
<div class="btn" style="left:255px;top:90px"><svg width="20" height="21" viewBox="0 0 20 21"><ellipse cx="10" cy="10.4" rx="5.5" ry="3" fill="none" stroke="#111" stroke-width="1.1"/></svg></div>
<div class="btn" style="left:277px;top:90px"><svg width="20" height="21" viewBox="0 0 20 21"><path d="M3.5 6.3 L4.2 5.5 L8 5.5 L9 7 L11.5 10.3 L13 10 L15.3 9.3 L15.3 10.8 L14.3 12.8 L12.8 14.2 L10.4 15 L8.2 15.2 L6.5 13.9 L5 12 L3.6 9.8 Z" fill="none" stroke="#111" stroke-width="1"/></svg></div>
<div class="btn" style="left:299px;top:90px"><svg width="20" height="21" viewBox="0 0 20 21"><rect x="3" y="5" width="1" height="1" fill="#f00"/><rect x="5" y="5" width="1" height="1" fill="#f00"/><rect x="7" y="5" width="1" height="1" fill="#f00"/><rect x="9" y="5" width="1" height="1" fill="#f00"/><rect x="11" y="5" width="1" height="1" fill="#f00"/><rect x="13" y="5" width="1" height="1" fill="#f00"/><rect x="15" y="5" width="1" height="1" fill="#f00"/><rect x="3" y="15" width="1" height="1" fill="#f00"/><rect x="5" y="15" width="1" height="1" fill="#f00"/><rect x="7" y="15" width="1" height="1" fill="#f00"/><rect x="9" y="15" width="1" height="1" fill="#f00"/><rect x="11" y="15" width="1" height="1" fill="#f00"/><rect x="13" y="15" width="1" height="1" fill="#f00"/><rect x="15" y="15" width="1" height="1" fill="#f00"/><rect x="3" y="7" width="1" height="1" fill="#f00"/><rect x="3" y="9" width="1" height="1" fill="#f00"/><rect x="3" y="11" width="1" height="1" fill="#f00"/><rect x="3" y="13" width="1" height="1" fill="#f00"/><rect x="15" y="7" width="1" height="1" fill="#f00"/><rect x="15" y="9" width="1" height="1" fill="#f00"/><rect x="15" y="11" width="1" height="1" fill="#f00"/><rect x="15" y="13" width="1" height="1" fill="#f00"/></svg></div>
<div class="btn" style="left:321px;top:90px"><svg width="20" height="21" viewBox="0 0 20 21"><rect x="4" y="7" width="1" height="1" fill="#f00"/><rect x="3" y="9" width="1" height="1" fill="#f00"/><rect x="4" y="11" width="1" height="1" fill="#f00"/><rect x="4" y="13" width="1" height="1" fill="#f00"/><rect x="5" y="14" width="1" height="1" fill="#f00"/><rect x="7" y="15" width="1" height="1" fill="#f00"/><rect x="9" y="16" width="1" height="1" fill="#f00"/><rect x="11" y="16" width="1" height="1" fill="#f00"/><rect x="12" y="15" width="1" height="1" fill="#f00"/><rect x="13" y="14" width="1" height="1" fill="#f00"/><rect x="14" y="13" width="1" height="1" fill="#f00"/><rect x="14" y="11" width="1" height="1" fill="#f00"/><rect x="14" y="9" width="1" height="1" fill="#f00"/><rect x="14" y="7" width="1" height="1" fill="#f00"/><rect x="14" y="5" width="1" height="1" fill="#f00"/><rect x="13" y="4" width="1" height="1" fill="#f00"/><rect x="12" y="5" width="1" height="1" fill="#f00"/><rect x="10" y="6" width="1" height="1" fill="#f00"/><rect x="8" y="8" width="1" height="1" fill="#f00"/><rect x="6" y="8" width="1" height="1" fill="#f00"/></svg></div>
<div class="btn" style="left:343px;top:90px"><svg width="20" height="21" viewBox="0 0 20 21"><path d="M7 5 H10 V16 H5 V13 H6 V9 H7 Z" fill="#000"/><path d="M8 6 H9 V15 H6 V14 H7 V10 H8 Z" fill="#f00"/><path d="M11 5 H14 V9 H15 V13 H16 V16 H11 Z" fill="#000"/><path d="M12 6 H13 V10 H14 V14 H15 V15 H12 Z" fill="#fff"/></svg></div>
<div class="btn" style="left:365px;top:90px"><svg width="20" height="21" viewBox="0 0 20 21"><path d="M9 5 H15 V10 H4 V7 H5 V6 H9 Z" fill="#000"/><path d="M10 6 H14 V9 H5 V8 H6 V7 H10 Z" fill="#fff"/><path d="M4 11 H15 V16 H9 V15 H5 V13 H4 Z" fill="#000"/><path d="M5 12 H14 V15 H10 V14 H6 V13 H5 Z" fill="#f00"/></svg></div>
<div class="btn" style="left:387px;top:90px"><svg width="20" height="21" viewBox="0 0 20 21"><rect x="4" y="8" width="1" height="1" fill="#000"/><rect x="5" y="7" width="1" height="1" fill="#000"/><rect x="6" y="6" width="1" height="1" fill="#000"/><rect x="7" y="6" width="1" height="1" fill="#000"/><rect x="8" y="6" width="1" height="1" fill="#000"/><rect x="4" y="8" width="1" height="2" fill="#000"/><path d="M8 4 L11 6.5 L8 9 Z" fill="#000"/><path d="M8 11 H11 V16 H3 V13 H4 V12 H8 Z" fill="#000"/><path d="M9 12 H10 V15 H4 V14 H5 V13 H9 Z" fill="#fff"/><path d="M12 5 H15 V14 H17 V16 H12 Z" fill="#000"/><path d="M13 6 H14 V10 H15 V14 H16 V15 H13 Z" fill="#f00"/></svg></div>
<div class="btn" style="left:409px;top:90px"><svg width="20" height="21" viewBox="0 0 20 21"><path d="M6 5 H13 V8 H14 V11 H15 V13 H16 V15.5 H12 V13 H8 V15.5 H4 V13 H5 V11 H6 V8 Z" fill="#000"/><rect x="9" y="8" width="2" height="3" fill="#d8dce0"/></svg></div>
<div class="btn" style="left:431px;top:90px"><svg width="20" height="21" viewBox="0 0 20 21"><defs><linearGradient id="gb" x1="0" x2="1"><stop offset="0" stop-color="#fff"/><stop offset="1" stop-color="#808080"/></linearGradient></defs><rect x="3.5" y="4.5" width="13" height="12.5" fill="url(#gb)" stroke="#222" stroke-width="1.1"/></svg></div>
<div class="btn" style="left:453px;top:90px"><svg width="20" height="21" viewBox="0 0 20 21"><path d="M7 6 L13 6 L14 7 L14 11 L13 12 L7 12 L6 11 L6 7 Z" fill="#000"/><path d="M7.5 7 L12.5 7 L13 7.5 L13 10.5 L12.5 11 L7.5 11 L7 10.5 L7 7.5 Z" fill="#fff"/><path d="M8.3 11.5 V9 Q8.5 7.8 10 7.8 Q11.5 7.8 11.5 9 V11.5" fill="none" stroke="#f00" stroke-width="1"/><path d="M8 12 H12 V15 L11 16.5 H9 L8 15 Z" fill="#000"/><rect x="9.5" y="13" width="1" height="2.5" fill="#fff"/><rect x="5" y="5" width="1" height="1" fill="#f00"/><rect x="6" y="6" width="1" height="1" fill="#f00"/><rect x="14" y="5" width="1" height="1" fill="#f00"/><rect x="13" y="6" width="1" height="1" fill="#f00"/><rect x="3" y="9" width="1" height="1" fill="#f00"/><rect x="4" y="9" width="1" height="1" fill="#f00"/><rect x="15" y="9" width="1" height="1" fill="#f00"/><rect x="16" y="9" width="1" height="1" fill="#f00"/><rect x="5" y="14" width="1" height="1" fill="#f00"/><rect x="6" y="13" width="1" height="1" fill="#f00"/><rect x="14" y="14" width="1" height="1" fill="#f00"/><rect x="13" y="13" width="1" height="1" fill="#f00"/></svg></div>
<div class="sb" style="left:57px"><svg width="20" height="21" viewBox="0 0 20 21"><circle cx="10" cy="10.5" r="2.6" fill="#000"/></svg></div>
<div class="sb" style="left:76px"><svg width="20" height="21" viewBox="0 0 20 21"><circle cx="10" cy="10.5" r="3.6" fill="#000"/></svg></div>
<div class="sb" style="left:95px"><svg width="20" height="21" viewBox="0 0 20 21"><circle cx="10" cy="10.5" r="4.6" fill="#000"/></svg></div>
<div class="sb" style="left:114px"><svg width="20" height="21" viewBox="0 0 20 21"><circle cx="10" cy="10.5" r="5.6" fill="#000"/></svg></div>
<div class="sb" style="left:133px"><svg width="20" height="21" viewBox="0 0 20 21"><line x1="6" y1="15" x2="14" y2="6" stroke="#000" stroke-width="1.5"/></svg></div>
<div class="a" style="left:162px;top:114px;width:21px;height:21px;background:#000"><svg width="21" height="21" viewBox="0 0 21 21"><rect x="1" y="1" width="4" height="4" fill="#808080"/><rect x="6" y="1" width="4" height="4" fill="#c0e0c0"/><rect x="11" y="1" width="4" height="4" fill="#00ff00"/><rect x="16" y="1" width="4" height="4" fill="#008000"/><rect x="1" y="6" width="4" height="4" fill="#ff0000"/><rect x="6" y="6" width="4" height="4" fill="#ff00c0"/><rect x="11" y="6" width="4" height="4" fill="#ffff00"/><rect x="16" y="6" width="4" height="4" fill="#ffffa0"/><rect x="1" y="11" width="4" height="4" fill="#0000ff"/><rect x="6" y="11" width="4" height="4" fill="#0080ff"/><rect x="11" y="11" width="4" height="4" fill="#80ffff"/><rect x="16" y="11" width="4" height="4" fill="#00ffa0"/><rect x="1" y="16" width="4" height="4" fill="#ffffff"/><rect x="6" y="16" width="4" height="4" fill="#808060"/><rect x="11" y="16" width="4" height="4" fill="#804000"/><rect x="16" y="16" width="4" height="4" fill="#ff8050"/></svg></div>
<div class="a" style="left:185px;top:114px;width:21px;height:21px;background:#000"></div>
<div class="sb" style="left:212px"><svg width="20" height="21" viewBox="0 0 20 21"><line x1="4.5" y1="16" x2="10" y2="11" stroke="#000" stroke-width="1.8" stroke-linecap="round"/><circle cx="12.5" cy="8.5" r="3.2" fill="#fff" stroke="#000" stroke-width="1.2"/><path d="M12.5 6.5 V10.5 M10.5 8.5 H14.5" stroke="#f00" stroke-width="1.2"/></svg></div>
<div class="sb" style="left:231px"><span class="num">2</span></div>
<div class="sb" style="left:250px"><span class="num">3</span></div>
<div class="sb" style="left:269px"><span class="num">4</span></div>
<div class="sb" style="left:288px"><span class="num">8</span></div>
<div class="sb" style="left:307px"><span class="num">16</span></div>
<svg style="left:0;top:0" width="800" height="600"><path d="M478.5 171.5 L478.5 185.5 L481.5 182.5 L484 187.5 L486.5 187.5 L486.5 184 L485 181.5 L488.5 181.5 Z" fill="#fff" stroke="#000" stroke-width="1"/></svg>
<div id="task" class="a"></div>
<div class="tb" style="left:3px;top:576px;width:42px;height:22px;background:#006000"><span style="left:4px;top:5px;font-family:'Liberation Sans',sans-serif;font-size:11px;letter-spacing:1.2px">Меню</span></div>
<div class="tb" style="left:50px;top:576px;width:15px;height:22px;background:#0080ff"><svg style="left:0;top:0" width="13" height="20"><path d="M6.5 6 V15 M4.5 8 L6.5 6 L8.5 8 M4.5 13 L6.5 15 L8.5 13" fill="none" stroke="#fff" stroke-width="1.1"/></svg></div>
<div class="tb" style="left:72px;top:576px;width:73px;height:22px;background:#5a6a8a"><span style="left:3px">ANIMAGE</span></div>
<div class="tb" style="left:729px;top:576px;width:18px;height:22px;background:#0080ff"><span style="left:2px">En</span></div>
<div class="tb" style="left:749px;top:576px;width:8px;height:22px;background:#006000;border-radius:2px"><div class="a" style="left:0;bottom:0;width:6px;height:5px;background:#f00000"></div></div>
<div class="tb" style="left:759px;top:576px;width:38px;height:22px;background:#0080ff"><span style="left:4px">22:29</span></div>
</body></html>
